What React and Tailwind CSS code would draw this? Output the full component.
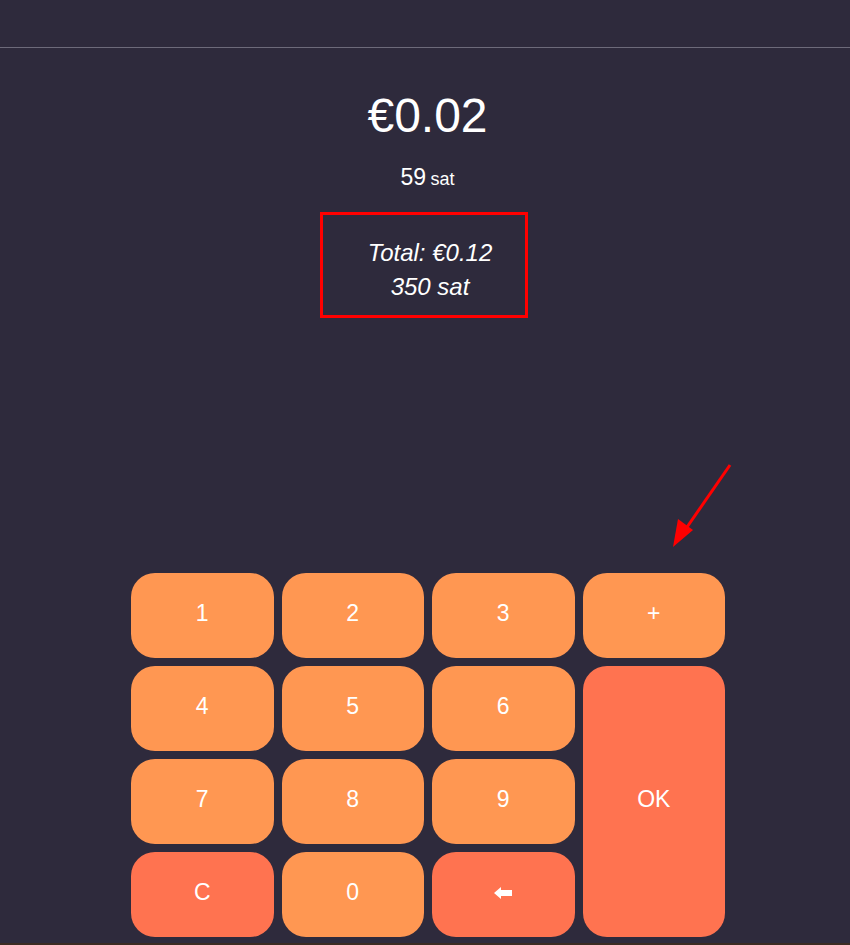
import { useState } from 'react';

const keys = [
  { label: '1', tone: 'num' },
  { label: '2', tone: 'num' },
  { label: '3', tone: 'num' },
  { label: '+', tone: 'num' },
  { label: '4', tone: 'num' },
  { label: '5', tone: 'num' },
  { label: '6', tone: 'num' },
  { label: 'OK', tone: 'ok' },
  { label: '7', tone: 'num' },
  { label: '8', tone: 'num' },
  { label: '9', tone: 'num' },
  { label: 'C', tone: 'act' },
  { label: '0', tone: 'num' },
  { label: 'back', tone: 'act' },
];

const BackIcon = () => (
  <svg width="18" height="12" viewBox="0 0 18 12" fill="white">
    <path d="M0 6 L7 0 L7 3 L18 3 L18 9 L7 9 L7 12 Z" />
  </svg>
);

const Key = ({ k }) => {
  const color = k.tone === 'num' ? 'bg-[#ff9752]' : 'bg-[#ff7350]';
  const span = k.label === 'OK' ? 'row-span-3' : '';
  return (
    <button
      className={`${color} ${span} rounded-[24px] flex items-center justify-center pb-[4px] text-white text-[23px] cursor-pointer`}
    >
      {k.label === 'back' ? <BackIcon /> : k.label}
    </button>
  );
};

const App = () => {
  const [amount] = useState('€0.02');

  return (
    <div
      className="relative h-[945px] bg-[#2e2a3c] flex flex-col overflow-hidden"
      style={{ fontFamily: '"Liberation Sans", Arial, sans-serif' }}
    >
      <div className="h-[48px] border-b border-[#6d6a7a]" />

      <div className="flex flex-col items-center text-white pl-[5px]">
        <div className="text-[48px] leading-none mt-[44px]">{amount}</div>
        <div className="mt-[26px] leading-none">
          <span className="text-[23px]">59</span>{' '}
          <span className="text-[18px]">sat</span>
        </div>
        <div className="mt-[23px] -ml-[7px] border-[3px] border-[#ff0000] w-[208px] h-[106px] pt-[10px] pl-[12px] flex flex-col items-center justify-center italic text-[24px] leading-[34px]">
          <div>Total: €0.12</div>
          <div>350 sat</div>
        </div>
      </div>

      <div className="grid grid-cols-4 grid-rows-[repeat(4,85px)] gap-2 w-[594px] ml-[131px] mt-[255px]">
        {keys.map((k) => (
          <Key key={k.label} k={k} />
        ))}
      </div>

      <div className="mt-auto h-[2px] bg-[#3b2b22]" />

      <svg
        className="absolute left-[665px] top-[460px]"
        width="75"
        height="95"
        viewBox="0 0 75 95"
      >
        <line x1="65" y1="5" x2="20" y2="70" stroke="#ff0000" strokeWidth="3" />
        <path d="M8 87 L13 59 L28 70 Z" fill="#ff0000" />
      </svg>
    </div>
  );
};

export default App;
